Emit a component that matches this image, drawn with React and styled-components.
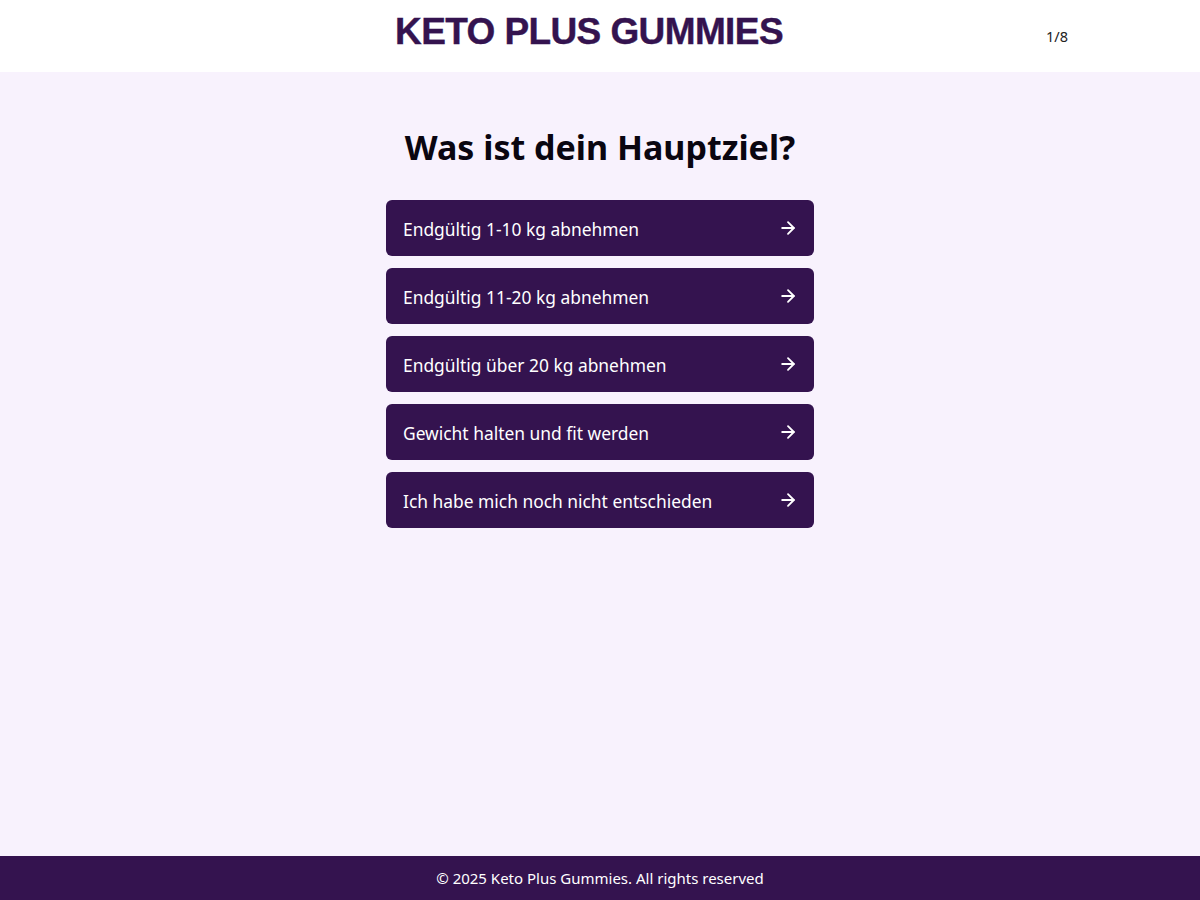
import styled, { createGlobalStyle } from "styled-components";
import { ArrowRight } from "lucide-react";

const GlobalStyle = createGlobalStyle`
    html, body, #root {
        margin: 0;
        padding: 0;
        height: 100%;
    }
    body {
        font-family: "Noto Sans", "Open Sans", sans-serif;
        background: #f8f2fd;
        color: #111;
    }
`;

const Page = styled.div`
    min-height: 100%;
    display: flex;
    flex-direction: column;
`;

const Header = styled.header`
    background: #ffffff;
    height: 72px;
    display: flex;
    justify-content: center;
`;

const HeaderInner = styled.div`
    width: 960px;
    padding: 0 12px;
    box-sizing: border-box;
    display: flex;
    align-items: center;
    justify-content: space-between;
`;

const Spacer = styled.span`
    width: 0;
`;

const Logo = styled.h1`
    margin: 0 0 9px;
    font-family: "Liberation Sans", Arial, sans-serif;
    font-weight: 700;
    font-size: 37px;
    letter-spacing: -0.6px;
    color: #34134f;
    line-height: 1;
    -webkit-text-stroke: 0.4px #34134f;
`;

const Counter = styled.span`
    font-size: 14.5px;
    color: #222;
`;

const Main = styled.main`
    flex: 1;
    display: flex;
    flex-direction: column;
    align-items: center;
    padding-top: 51px;
`;

const Title = styled.h2`
    margin: 0 0 28px;
    font-size: 34px;
    font-weight: 700;
    color: #0a0610;
    line-height: 49px;
`;

const OptionList = styled.div`
    width: 428px;
    display: flex;
    flex-direction: column;
    gap: 12px;
`;

const OptionButton = styled.button`
    height: 56px;
    border: none;
    border-radius: 6px;
    background: #34134f;
    color: #ffffff;
    font-family: inherit;
    font-size: 17.4px;
    text-align: left;
    padding: 2px 16px 0 17px;
    display: flex;
    align-items: center;
    justify-content: space-between;
    cursor: pointer;
`;

const Arrow = styled(ArrowRight)`
    margin-top: -2px;
    flex-shrink: 0;
`;

const Footer = styled.footer`
    background: #34134f;
    color: #ffffff;
    height: 44px;
    display: flex;
    align-items: center;
    justify-content: center;
    font-size: 15px;
`;

const options = [
    "Endgültig 1-10 kg abnehmen",
    "Endgültig 11-20 kg abnehmen",
    "Endgültig über 20 kg abnehmen",
    "Gewicht halten und fit werden",
    "Ich habe mich noch nicht entschieden",
];

const App = () => {
    return (
        <Page>
            <GlobalStyle />
            <Header>
                <HeaderInner>
                    <Spacer />
                    <Logo>KETO PLUS GUMMIES</Logo>
                    <Counter>1/8</Counter>
                </HeaderInner>
            </Header>
            <Main>
                <Title>Was ist dein Hauptziel?</Title>
                <OptionList>
                    {options.map((o) => (
                        <OptionButton key={o}>
                            <span>{o}</span>
                            <Arrow size={20} strokeWidth={2.2} />
                        </OptionButton>
                    ))}
                </OptionList>
            </Main>
            <Footer>© 2025 Keto Plus Gummies. All rights reserved</Footer>
        </Page>
    );
};

export default App;
